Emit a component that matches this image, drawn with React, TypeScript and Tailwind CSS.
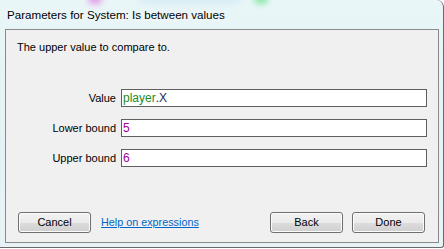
export default function App() {
  const btn =
    "w-[73px] h-[21px] rounded-[3px] border border-[#707070] bg-[linear-gradient(#f2f2f2_0%,#ebebeb_50%,#dddddd_50%,#cfcfcf_100%)] shadow-[inset_0_0_0_1px_#fbfbfb] text-[11px] text-black flex items-center justify-center";
  return (
    <div className="w-[444px] h-[249px] bg-white overflow-hidden font-['Liberation_Sans',Arial,sans-serif]">
      <div className="relative w-[444px] h-[248px] bg-[linear-gradient(180deg,#e9f6f8_0%,#e4f2f5_60%,#e8f3f6_100%)] border-r border-b border-[#6a6a6a] rounded-tr-[7px] rounded-br-[3px] flex flex-col pl-[5px] pr-[4px] pb-[4px]">
        <div className="absolute left-[88px] top-[-6px] w-[14px] h-[10px] rounded-full bg-[#e070e0] blur-[3px] opacity-70" />
        <div className="absolute left-[254px] top-[-6px] w-[14px] h-[10px] rounded-full bg-[#60e080] blur-[3px] opacity-70" />
        <div className="absolute left-[140px] top-[-4px] w-[100px] h-[6px] rounded-full bg-[#b8d8f0] blur-[4px] opacity-60" />
        <div className="h-[29px] flex items-center pl-[2px] relative">
          <span className="text-[11.6px] text-black leading-none [text-shadow:0_0_6px_#ffffff]">
            Parameters for System: Is between values
          </span>
        </div>
        <div className="flex-1 bg-[#f0f0f0] border border-[#8a8a8a] flex flex-col relative">
          <div className="pt-[11px] pl-[11px] text-[11px] leading-[13px] text-black">
            The upper value to compare to.
          </div>
          <div className="mt-[35px] flex flex-col gap-[12px]">
            <div className="flex items-center">
              <div className="w-[110px] text-right text-[11px] text-black">Value</div>
              <div className="ml-[5px] w-[306px] h-[18px] bg-white border border-[#5f5f5f] flex items-center pl-[1px] text-[12px]">
                <span className="text-[#1f8a1f]">player</span>
                <span className="text-[#14325e]">.X</span>
              </div>
            </div>
            <div className="flex items-center">
              <div className="w-[110px] text-right text-[11px] text-black">Lower bound</div>
              <div className="ml-[5px] w-[306px] h-[18px] bg-white border border-[#5f5f5f] flex items-center pl-[1px] text-[12px] text-[#a000a0]">
                5
              </div>
            </div>
            <div className="flex items-center">
              <div className="w-[110px] text-right text-[11px] text-black">Upper bound</div>
              <div className="ml-[5px] w-[306px] h-[18px] bg-white border border-[#5f5f5f] flex items-center pl-[1px] text-[12px] text-[#a000a0]">
                6
              </div>
            </div>
          </div>
          <div className="mt-auto mb-[9px] flex items-center pl-[12px] pr-[13px]">
            <div className={btn}>Cancel</div>
            <a className="ml-[10px] text-[10.8px] text-[#0066cc] underline">Help on expressions</a>
            <div className="ml-auto flex gap-[9px]">
              <div className={btn}>Back</div>
              <div className={btn}>Done</div>
            </div>
          </div>
        </div>
      </div>
    </div>
  );
}
